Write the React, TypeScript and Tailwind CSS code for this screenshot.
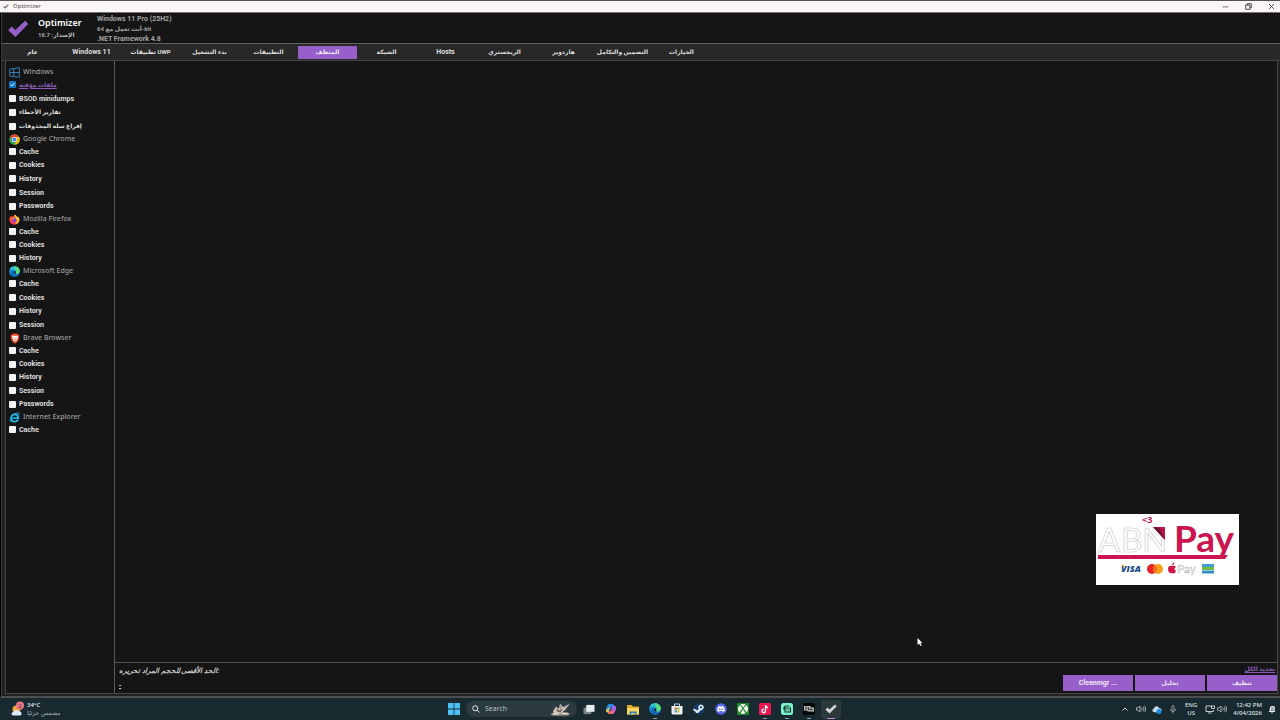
import type { ReactNode } from 'react';

const tabs = [
  'عام',
  'Windows 11',
  'تطبيقات UWP',
  'بدء التشغيل',
  'التطبيقات',
  'المنظف',
  'الشبكة',
  'Hosts',
  'الريجستري',
  'هاردوير',
  'التضمين والتكامل',
  'الخيارات',
];

const isArabic = (text: string) => /[\u0600-\u06ff]/.test(text);
const sizeFor = (text: string) => (isArabic(text) ? 'text-[6px]' : 'text-[7px]');

function CheckMark({ className }: { className: string }) {
  return (
    <svg viewBox="0 0 24 20" className={className} aria-hidden="true">
      <path d="M1 11.5 L5 7.2 L9 11.2 L20 .8 L23.3 4.4 L9.2 19 Z" fill="currentColor" />
    </svg>
  );
}

function WindowsOutline() {
  return (
    <svg viewBox="0 0 22 22" className="size-[11px]" fill="none" stroke="#3d87bd" strokeWidth="1.8" aria-hidden="true">
      <path d="M1.5 4 L20.5 1.5 V20.5 L1.5 18 Z M9.5 3 V19 M1.5 11 H20.5" />
    </svg>
  );
}

function ChromeIcon() {
  return (
    <svg viewBox="0 0 24 24" className="size-[11px]" aria-hidden="true">
      <circle cx="12" cy="12" r="11.5" fill="#34a853" />
      <path d="M12 12 L2 6.2 A11.5 11.5 0 0 1 22 6.2 L12 6.5 Z" fill="#ea4335" />
      <path d="M12 6.5 H22.2 A11.5 11.5 0 0 1 12 23.5 L17 14 Z" fill="#fbbc04" />
      <circle cx="12" cy="12" r="5.6" fill="#fff" />
      <circle cx="12" cy="12" r="4.3" fill="#4285f4" />
    </svg>
  );
}

function FirefoxIcon() {
  return (
    <svg viewBox="0 0 24 24" className="size-[11px]" aria-hidden="true">
      <path d="M4 3 C4 5 5 6 7 6 C9 3 12 4 13 1 C16 3 17 5 18 7 L20 6 C23 10 24 14 21 18 C18 24 8 25 3 19 C-1 14 1 6 4 3Z" fill="#ff4b3a" />
      <path d="M13 1 C16 3 17 5 18 7 L20 6 C23 10 24 14 21 18 C19 21 16 22 13 22 C18 19 19 12 13 8 C12 6 12 3 13 1Z" fill="#ffc72e" />
      <path d="M2 13 C4 20 10 22 14 21 C9 25 1 21 2 13Z" fill="#e31587" />
      <circle cx="11.5" cy="13" r="4.6" fill="#7542e5" />
      <path d="M6 9 C9 8 12 9 13 11 C10 11 9 13 7 12Z" fill="#ff9640" />
    </svg>
  );
}

function EdgeIcon({ className }: { className: string }) {
  return (
    <svg viewBox="0 0 24 24" className={className} aria-hidden="true">
      <circle cx="12" cy="12" r="11.5" fill="#1591dc" />
      <path d="M.8 10 C2 3 7 .5 12 .5 C19 .5 23.5 5.5 23.5 11 C23.5 15 20 17 17 17 C13.5 17 14 15 15 13 C16 8 5 4 .8 10Z" fill="#37c6d0" />
      <path d="M12 .5 C19 .5 23.5 5.5 23.5 11 C23.5 15 20 17 17 17 C13.5 17 14 15 15 13 C16 8 13 4 12 .5Z" fill="#5fdc7a" />
      <path d="M9 10 C6 15 10 21 21.5 18.5 C18 23 11 24.5 6 21 C3 17 4 12 9 10Z" fill="#1263b8" />
      <path d="M10.5 11.5 C9 15 12 18 17 17.5 C14 17 13.5 15.5 15 13 C14.5 11 12 10.5 10.5 11.5Z" fill="#131a20" />
    </svg>
  );
}

function BraveIcon() {
  return (
    <svg viewBox="0 0 22 24" className="h-[11px] w-[10px]" aria-hidden="true">
      <path d="M6 1 H16 L18 3 L21 5 L20 8 L20.5 11 L18 18 L11 23.5 L4 18 L1.5 11 L2 8 L1 5 L4 3 Z" fill="#f0401f" />
      <path d="M5 6 L9 5.5 L11 6.5 L13 5.5 L17 6 L18 9 L15 14 L16 15.5 L11 19 L6 15.5 L7 14 L4 9 Z" fill="#fff" />
      <path d="M7 8.5 L10 9.5 L9 12 Z M15 8.5 L12 9.5 L13 12 Z M8.5 15 L11 13.5 L13.5 15 L11 16.5Z" fill="#f0401f" />
    </svg>
  );
}

function ExplorerIcon() {
  return (
    <svg viewBox="0 0 24 24" className="size-[11px]" fill="none" aria-hidden="true">
      <path d="M20 17 C18 20 15.5 21 12.5 21 C8 21 5 17.5 5 13 C5 8 8.500 5 12.800 5 C17.5 5 20.5 8 20.5 13.5 H8" stroke="#1fb6ea" strokeWidth="4" />
      <path d="M4 22 C-1 19 6 6 16 2.5 C20 1 23 1.5 22 6" stroke="#1fb6ea" strokeWidth="2" />
    </svg>
  );
}

type Group = { name: string; icon: ReactNode; items: string[]; height: string };

const groups: Group[] = [
  {
    name: 'Windows',
    icon: <WindowsOutline />,
    items: ['ملفات مؤقتة', 'BSOD minidumps', 'تقارير الأخطاء', 'إفراغ سلة المحذوفات'],
    height: 'h-[55px]',
  },
  { name: 'Google Chrome', icon: <ChromeIcon />, items: ['Cache', 'Cookies', 'History', 'Session', 'Passwords'], height: 'h-[68px]' },
  { name: 'Mozilla Firefox', icon: <FirefoxIcon />, items: ['Cache', 'Cookies', 'History'], height: 'h-[40px]' },
  { name: 'Microsoft Edge', icon: <EdgeIcon className="size-[11px]" />, items: ['Cache', 'Cookies', 'History', 'Session'], height: 'h-[55px]' },
  { name: 'Brave Browser', icon: <BraveIcon />, items: ['Cache', 'Cookies', 'History', 'Session', 'Passwords'], height: 'h-[67px]' },
  { name: 'Internet Explorer', icon: <ExplorerIcon />, items: ['Cache'], height: 'h-[13px]' },
];

function CleanerGroup({ group }: { group: Group }) {
  return (
    <section>
      <h2 className="flex h-3 items-center gap-[3px] font-['Noto_Sans','DejaVu_Sans',sans-serif] text-[7px] leading-3 font-medium text-[#9c9c9c]">
        <span className="flex w-[11px] shrink-0 justify-center">{group.icon}</span>
        {group.name}
      </h2>
      <ul className={`grid auto-rows-fr ${group.height}`}>
        {group.items.map((item, i) => {
          const checked = group.name === 'Windows' && i === 0;
          return (
            <li key={item} className="flex items-center">
              <label className={`flex items-center gap-[3px] leading-3 font-bold whitespace-nowrap ${sizeFor(item)}`}>
                <span className="relative flex size-[7px]">
                  <input
                    type="checkbox"
                    defaultChecked={checked}
                    className="peer size-[7px] appearance-none rounded-[1px] bg-[#f4f4f4] checked:bg-[#1478c8]"
                  />
                  <svg viewBox="0 0 7 7" className="pointer-events-none absolute inset-0 hidden size-[7px] peer-checked:block" fill="none" stroke="#d8ecff" aria-hidden="true">
                    <path d="M1.5 3.5 L3 5 L5.5 2" />
                  </svg>
                </span>
                <span className={checked ? 'text-[#8d5cbb] underline' : 'text-[#dedede]'}>{item}</span>
              </label>
            </li>
          );
        })}
      </ul>
    </section>
  );
}

function PaymentBadge() {
  return (
    <aside className="absolute right-[41px] bottom-[135px] flex h-[71px] w-[143px] flex-col bg-white" aria-label="ABN Pay">
      <svg viewBox="0 0 143 71" className="h-full w-full" aria-hidden="true">
        <text x="46" y="9" fontFamily="Open Sans, sans-serif" fontSize="9" fontWeight="700" fill="#c31548">&lt;3</text>
        <g fontFamily="Lato, sans-serif" fontSize="33" fill="#fff" stroke="#c4c4c4" strokeWidth="0.6">
          <text x="2" y="38">A</text>
          <text x="25" y="38">B</text>
          <text x="46" y="38">N</text>
        </g>
        <text x="78" y="38" fontFamily="Lato, sans-serif" fontSize="37" fontWeight="700" fill="#cb154f">Pay</text>
        <path d="M57 13 H69 V26 Z" fill="#b9134a" />
        <path d="M57 13 L63 14 L69 26 Z" fill="#651333" />
        <path d="M2 41 H132 L129 45 H2 Z" fill="#cb154f" />
        <text x="25" y="58" fontFamily="Open Sans, sans-serif" fontSize="9" fontWeight="800" fontStyle="italic" fill="#164a88">VISA</text>
        <path d="M25 51 H28 L29 54 Z" fill="#efb32e" />
        <circle cx="56" cy="55" r="5" fill="#e52328" />
        <circle cx="62" cy="55" r="5" fill="#f6a01d" />
        <path d="M59 51 A5 5 0 0 1 59 59 A5 5 0 0 1 59 51" fill="#f26322" />
        <path d="M76 52 C74 51 72 52 72 55 C72 58 74 60 76 59 C78 60 79 59 80 57 C78 56 78 54 80 53 C79 51.5 77 51.5 76 52 M76 51 C76 49.5 77 48.5 78.5 48.5 C78.5 50 77.5 51 76 51" fill="#cf1748" />
        <text x="81" y="59" fontFamily="Lato, sans-serif" fontSize="12" fill="#fff" stroke="#b5b5b5" strokeWidth="0.5">Pay</text>
        <path d="M106 50 H118 V53 H106Z" fill="#3f9fd3" />
        <path d="M106 53 H118 V56 H106Z" fill="#72b844" />
        <path d="M106 56.5 H118 V59.5 H106Z" fill="#348fc3" />
      </svg>
    </aside>
  );
}

function AppSlot({ label, children, running, active }: { label: string; children: ReactNode; running?: boolean; active?: boolean }) {
  return (
    <button
      type="button"
      aria-label={label}
      className={`relative flex h-[19px] w-5 items-center justify-center rounded-[2px] ${active ? 'bg-[#2b393b]' : ''}`}
    >
      {children}
      {running && (
        <span className={`absolute bottom-0 h-px rounded-full ${active ? 'w-2 bg-[#c68add]' : 'w-1 bg-[#9aa5a8]'}`} />
      )}
    </button>
  );
}

function Speaker() {
  return (
    <svg viewBox="0 0 20 16" className="h-2 w-[10px]" fill="none" stroke="#c9d0d2" strokeWidth="1.5" aria-hidden="true">
      <path d="M1 5.5 H4 L8 2 V14 L4 10.5 H1 Z M11 5 C12.5 7 12.5 9 11 11 M14 3 C16.5 6 16.5 10 14 13 M17 1.5 C20 5 20 11 17 14.5" />
    </svg>
  );
}

function Taskbar() {
  return (
    <footer className="grid h-[22px] shrink-0 grid-cols-[1fr_auto_1fr] items-center bg-[#182a2f] font-['Noto_Sans','DejaVu_Sans',sans-serif] text-[#dfe5e6]">
      <button type="button" className="flex items-center gap-[2px] justify-self-start pl-[11px] text-left">
        <svg viewBox="0 0 28 32" className="h-4 w-[14px]" aria-hidden="true">
          <circle cx="11" cy="17" r="8" fill="#f4a53a" />
          <path d="M4 29 C0 28 0 22 5 22 C7 17 14 17 16 21 C22 20 23 29 18 29 Z" fill="#dce8fb" />
          <circle cx="18" cy="9" r="8" fill="#e87883" />
          <text x="15" y="13" fontFamily="Noto Sans, sans-serif" fontSize="11" fill="#5d1a2c">2</text>
        </svg>
        <span className="flex flex-col text-[6px] leading-2">
          <span className="font-semibold">34°C</span>
          <span className="text-[#a9b3b5]">مشمس جزئيًا</span>
        </span>
      </button>

      <nav className="flex items-center gap-[2px] pl-[5px]" aria-label="Taskbar">
        <AppSlot label="Start">
          <svg viewBox="0 0 12 12" className="size-3" fill="#4cc0f5" aria-hidden="true">
            <path d="M0 0 H5.6 V5.6 H0Z M6.4 0 H12 V5.6 H6.4Z M0 6.4 H5.6 V12 H0Z M6.4 6.4 H12 V12 H6.4Z" />
          </svg>
        </AppSlot>
        <label className="flex h-4 w-[111px] items-center gap-[5px] rounded-full bg-[#2c3b3f] px-[6px]">
          <svg viewBox="0 0 16 16" className="size-2 shrink-0" fill="none" stroke="#e4e8e9" strokeWidth="2" aria-hidden="true">
            <circle cx="6.5" cy="6.5" r="5" />
            <path d="M10.5 10.5 L15 15" />
          </svg>
          <input type="search" aria-label="Search" placeholder="Search" className="w-0 min-w-0 flex-1 bg-transparent text-[7px] leading-3 outline-none placeholder:text-[#b7c0c2]" />
          <svg viewBox="0 0 44 28" className="h-[14px] w-[22px] shrink-0" aria-hidden="true">
            <path d="M3 25 C8 20 12 22 15 19 C30 22 35 18 42 24 L37 27 H8Z" fill="#a79c92" />
            <path d="M8 19 L14 9 L20 14 L22 3 L28 10 L41 4 L32 16 L24 22 L10 23Z" fill="#d6c8bd" />
            <path d="M14 12 L20 17 L28 13 L23 21 L16 19Z" fill="#735c57" />
            <path d="M22 4 L26 11 L23 16Z M31 9 L39 6 L29 14Z" fill="#8a8c8f" />
            <path d="M8 24 H20 M26 23 H37" stroke="#f0e9e0" strokeWidth="2" />
          </svg>
        </label>
        <AppSlot label="Task view">
          <svg viewBox="0 0 26 24" className="h-[11px] w-3" aria-hidden="true">
            <path d="M1 8 H18 V22 H1Z" fill="#798488" />
            <path d="M7 2 H25 V17 H7Z" fill="#e9edee" />
          </svg>
        </AppSlot>
        <AppSlot label="Copilot">
          <svg viewBox="0 0 24 24" className="size-3" aria-hidden="true">
            <path d="M8 2 H15 C17 2 18 4 18.5 6 L13 7 L9 18 C8 20 3 19 2 16 C1 13 5 2 8 2Z" fill="#258ce8" />
            <path d="M2 14 L9 8 L7 18 C6 20 3 19 2 16Z" fill="#efc43f" />
            <path d="M16 22 H9 C7 22 6 20 5.5 18 L11 17 L15 6 C16 4 21 5 22 8 C23 11 19 22 16 22Z" fill="#df58ad" />
            <path d="M13 6 H20 C23 8 22 11 21 14 L15 15Z" fill="#9964ed" />
            <path d="M9 17 L15 16 L12 22 H9 C7 22 6 20 5.5 18Z" fill="#f0773f" />
          </svg>
        </AppSlot>
        <AppSlot label="File Explorer">
          <svg viewBox="0 0 24 22" className="h-[11px] w-3" aria-hidden="true">
            <path d="M0 2 H9 L12 5 H24 V21 H0Z" fill="#e6a82b" />
            <path d="M0 8 H24 V21 H0Z" fill="#fbd45b" />
            <path d="M5 21 V15 H19 V21 H15 V18 H9 V21Z" fill="#2c83c7" />
          </svg>
        </AppSlot>
        <AppSlot label="Microsoft Edge" running>
          <EdgeIcon className="size-3" />
        </AppSlot>
        <AppSlot label="Microsoft Store">
          <svg viewBox="0 0 24 24" className="size-3" aria-hidden="true">
            <path d="M7 6 V2 H17 V6" fill="none" stroke="#b4dcf1" strokeWidth="2" />
            <path d="M1 6 H23 V20 Q23 23 20 23 H4 Q1 23 1 20Z" fill="#f1f4f5" />
            <path d="M7 9 H11.5 V13.5 H7Z" fill="#e55b38" />
            <path d="M12.5 9 H17 V13.5 H12.5Z" fill="#80b744" />
            <path d="M7 14.5 H11.5 V19 H7Z" fill="#2c9cdd" />
            <path d="M12.5 14.5 H17 V19 H12.5Z" fill="#f2b82f" />
          </svg>
        </AppSlot>
        <AppSlot label="Steam">
          <svg viewBox="0 0 24 24" className="size-3" aria-hidden="true">
            <circle cx="12" cy="12" r="11" fill="#153b68" />
            <path d="M1 11 L9 15 L13 10 L18 12 L12 18 C10 22 5 20 5 17 L1 15Z" fill="#eef4f7" />
            <circle cx="16" cy="8.5" r="4.5" fill="#c6d4e2" stroke="#eef4f7" strokeWidth="2" />
            <circle cx="16" cy="8.5" r="2" fill="#153b68" />
          </svg>
        </AppSlot>
        <AppSlot label="Discord">
          <svg viewBox="0 0 24 24" className="size-3" aria-hidden="true">
            <circle cx="12" cy="12" r="11.5" fill="#5967e9" />
            <path d="M7 7 L10 6 L11 7 H13 L14 6 L17 7 C19 10 20 13 19.5 16 L16 18 L15 16 H9 L8 18 L4.5 16 C4 13 5 10 7 7Z" fill="#fff" />
            <circle cx="9.5" cy="12.5" r="1.7" fill="#5967e9" />
            <circle cx="14.5" cy="12.5" r="1.7" fill="#5967e9" />
          </svg>
        </AppSlot>
        <AppSlot label="Xbox">
          <svg viewBox="0 0 24 24" className="size-3" aria-hidden="true">
            <path d="M0 0 H24 V24 H0Z" fill="#23852b" />
            <circle cx="12" cy="12" r="10" fill="#f0f5ed" />
            <path d="M6 5 Q10 6 18 20 M18 5 Q14 6 6 20" fill="none" stroke="#23852b" strokeWidth="2.4" />
          </svg>
        </AppSlot>
        <AppSlot label="TikTok" running>
          <svg viewBox="0 0 24 24" className="size-3" aria-hidden="true">
            <rect width="24" height="24" rx="3" fill="#ed1651" />
            <path d="M13 4 V16 A3.5 3.5 0 1 1 9.5 12.5 M13 4 C13 7 15 9 18 9" fill="none" stroke="#fff" strokeWidth="2.8" />
          </svg>
        </AppSlot>
        <AppSlot label="Streamlabs" running>
          <svg viewBox="0 0 24 24" className="size-3" aria-hidden="true">
            <rect width="24" height="24" rx="5" fill="#7bf2cb" />
            <path d="M6 14 V10 Q6 6 10 6 H17 M8 10 H19 V18 H8Z" fill="none" stroke="#12382f" strokeWidth="2.2" />
            <path d="M12 13 V15 M15.5 13 V15" stroke="#12382f" strokeWidth="2" />
          </svg>
        </AppSlot>
        <AppSlot label="Video editor" running>
          <svg viewBox="0 0 24 24" className="size-3" aria-hidden="true">
            <rect width="24" height="24" rx="3" fill="#050606" />
            <path d="M2 6 H15 V9 H22 V17 H9 V15 H2Z" fill="#c6c6c6" />
            <path d="M4 10 H13 M6 7 V14 M11 8 V15 M12 13 H21 M16 10 V16" stroke="#272727" strokeWidth="1.5" />
          </svg>
        </AppSlot>
        <AppSlot label="Optimizer" running active>
          <CheckMark className="h-[10px] w-3 text-[#d5d8d9]" />
        </AppSlot>
      </nav>

      <div className="flex items-center justify-self-end pr-1">
        <button type="button" aria-label="Show hidden icons" className="mr-2">
          <svg viewBox="0 0 12 8" className="h-1 w-[6px]" fill="none" stroke="#d2d8da" strokeWidth="2" aria-hidden="true"><path d="M1 7 L6 2 L11 7" /></svg>
        </button>
        <Speaker />
        <svg viewBox="0 0 20 18" className="ml-[6px] h-[9px] w-[10px]" aria-hidden="true">
          <path d="M3 14 C-1 12 1 7 4 7 C5 2 12 1 14 6 C18 6 20 9 19 12 L10 15Z" fill="#bfd9eb" />
          <circle cx="14" cy="13" r="5" fill="#198ddd" />
        </svg>
        <svg viewBox="0 0 12 18" className="ml-2 h-[9px] w-[6px]" fill="none" stroke="#aeb5b7" strokeWidth="1.5" aria-hidden="true">
          <rect x="4" y="1" width="4" height="10" rx="2" />
          <path d="M1 8 C1 15 11 15 11 8 M6 13 V17" />
        </svg>
        <span className="ml-[9px] flex flex-col text-center text-[6px] leading-2 font-medium"><span>ENG</span><span>US</span></span>
        <svg viewBox="0 0 20 18" className="ml-2 h-[9px] w-[10px]" fill="none" stroke="#d5dbdd" strokeWidth="1.8" aria-hidden="true">
          <path d="M13 2 H2 V13 H17 V10 M6 16 H13 M13 2 H19 V7 H13Z" />
        </svg>
        <span className="ml-[2px]"><Speaker /></span>
        <time className="ml-[6px] flex flex-col text-right text-[6px] leading-2 font-medium"><span>12:42 PM</span><span>4/04/2026</span></time>
        <svg viewBox="0 0 16 18" className="ml-[6px] h-[9px] w-2" aria-hidden="true">
          <path d="M3 12 L4 5 C5 1 13 1 14 5 L13 12 L15 14 H1Z M6 15 H10 L8 18Z" fill="#edf0f1" />
          <path d="M6 6 H11 L6 11 H11" fill="none" stroke="#344347" strokeWidth="1.5" />
        </svg>
      </div>
    </footer>
  );
}

export default function App() {
  return (
    <div
      dir="ltr"
      className="relative flex h-screen flex-col overflow-hidden bg-[#151515] font-['Roboto','DejaVu_Sans',sans-serif] text-[#dedede]"
    >
      <header className="flex h-[13px] shrink-0 items-center border-t border-b border-t-[#5a5052] border-b-[#777273] bg-[#faf6f5] pr-1 pl-[3px] font-['Noto_Sans',sans-serif] text-[6px] leading-[11px] text-[#4b4849]">
        <CheckMark className="h-[5px] w-[6px] text-[#777]" />
        <span className="ml-1">Optimizer</span>
        <div className="ml-auto flex items-center gap-[13px] text-[#3c3a3b]">
          <button type="button" aria-label="Minimize" className="flex size-[10px] items-center justify-center">
            <svg viewBox="0 0 10 10" className="size-[7px]" stroke="currentColor" aria-hidden="true"><path d="M1 5.5 H9" /></svg>
          </button>
          <button type="button" aria-label="Restore" className="flex size-[10px] items-center justify-center">
            <svg viewBox="0 0 10 10" className="size-[7px]" fill="none" stroke="currentColor" strokeWidth="1.3" aria-hidden="true"><path d="M1 3 H7 V9 H1Z M3 3 V1 H9 V7 H7" /></svg>
          </button>
          <button type="button" aria-label="Close" className="flex size-[10px] items-center justify-center">
            <svg viewBox="0 0 10 10" className="size-[7px]" stroke="currentColor" strokeWidth="1.3" aria-hidden="true"><path d="M1.5 1.5 L8.5 8.5 M8.5 1.5 L1.5 8.5" /></svg>
          </button>
        </div>
      </header>

      <main className="flex min-h-0 flex-1 flex-col border-b-2 border-l border-b-[#4b4f50] border-l-black bg-[#3a3a3a] pl-px">
        <div className="flex h-[30px] shrink-0 items-center bg-[#151515] pt-[2px] pl-[5px]">
          <CheckMark className="h-[18px] w-[22px] text-[#965fc9]" />
          <div className="ml-[9px] flex w-[59px] flex-col font-['Noto_Sans','DejaVu_Sans',sans-serif]">
            <h1 className="text-[9px] leading-3 font-semibold text-white">Optimizer</h1>
            <p className="text-[6px] leading-3 font-semibold text-[#b5b5b5]">الإصدار: 16.7</p>
          </div>
          <div className="flex flex-col text-[7px] leading-[10px] font-bold whitespace-nowrap text-[#a3a3a3]">
            <p>Windows 11 Pro (25H2)</p>
            <p className="text-[6px]">أنت تعمل مع 64-bit</p>
            <p>.NET Framework 4.8</p>
          </div>
        </div>

        <nav className="flex h-[18px] shrink-0 items-center border-t border-b border-t-[#626262] border-b-[#424242] bg-[#282828] pl-px" aria-label="Sections">
          {tabs.map((tab, i) => (
            <button
              key={tab}
              type="button"
              aria-current={i === 5 ? 'page' : undefined}
              className={`h-[13px] w-[59px] shrink-0 text-center leading-3 font-bold whitespace-nowrap ${sizeFor(tab)} ${i === 5 ? 'bg-[#965fc9] text-[#f0e4fa]' : 'text-[#dedede]'}`}
            >
              {tab}
            </button>
          ))}
        </nav>

        <div className="flex min-h-0 flex-1 bg-[#202020] pr-[2px] pb-[2px] pl-[3px]">
          <div className="flex min-w-0 flex-1 border-r border-b border-l border-[#484848] bg-[#151515]">
            <aside className="w-[109px] shrink-0 border-r border-[#5a5a5a] pt-[5px] pl-[3px]">
              {groups.map((group) => (
                <CleanerGroup key={group.name} group={group} />
              ))}
            </aside>
            <div className="flex min-w-0 flex-1 flex-col">
              <div className="flex-1" />
              <div className="flex h-[31px] shrink-0 justify-between border-t border-[#555]">
                <div className="flex flex-col pl-1 font-['Noto_Sans','DejaVu_Sans',sans-serif] text-[7px] leading-4 font-semibold text-[#cacaca] italic">
                  <p>الحد الأقصى للحجم المراد تحريره:</p>
                  <p className="leading-3 underline">-</p>
                </div>
                <div className="flex flex-col items-end">
                  <a href="#select-all" className="pr-[2px] text-[6px] leading-3 font-bold text-[#8d5cbb] underline">تحديد الكل</a>
                  <div className="flex gap-[2px] leading-4 font-bold text-[#f0e4fa]">
                    <button type="button" className="h-4 w-[70px] bg-[#965fc9] text-[7px]">Cleanmgr ...</button>
                    <button type="button" className="h-4 w-[70px] bg-[#965fc9] text-[6px]">تحليل</button>
                    <button type="button" className="h-4 w-[70px] bg-[#965fc9] text-[6px]">تنظيف</button>
                  </div>
                </div>
              </div>
            </div>
          </div>
        </div>
      </main>

      <Taskbar />
      <PaymentBadge />
      <svg viewBox="0 0 12 18" className="pointer-events-none absolute top-[637px] left-[917px] h-[10px] w-[6px]" aria-hidden="true">
        <path d="M1 1 V15 L4 12 L7 17 L9 16 L7 11 H11Z" fill="#fff" />
      </svg>
    </div>
  );
}
